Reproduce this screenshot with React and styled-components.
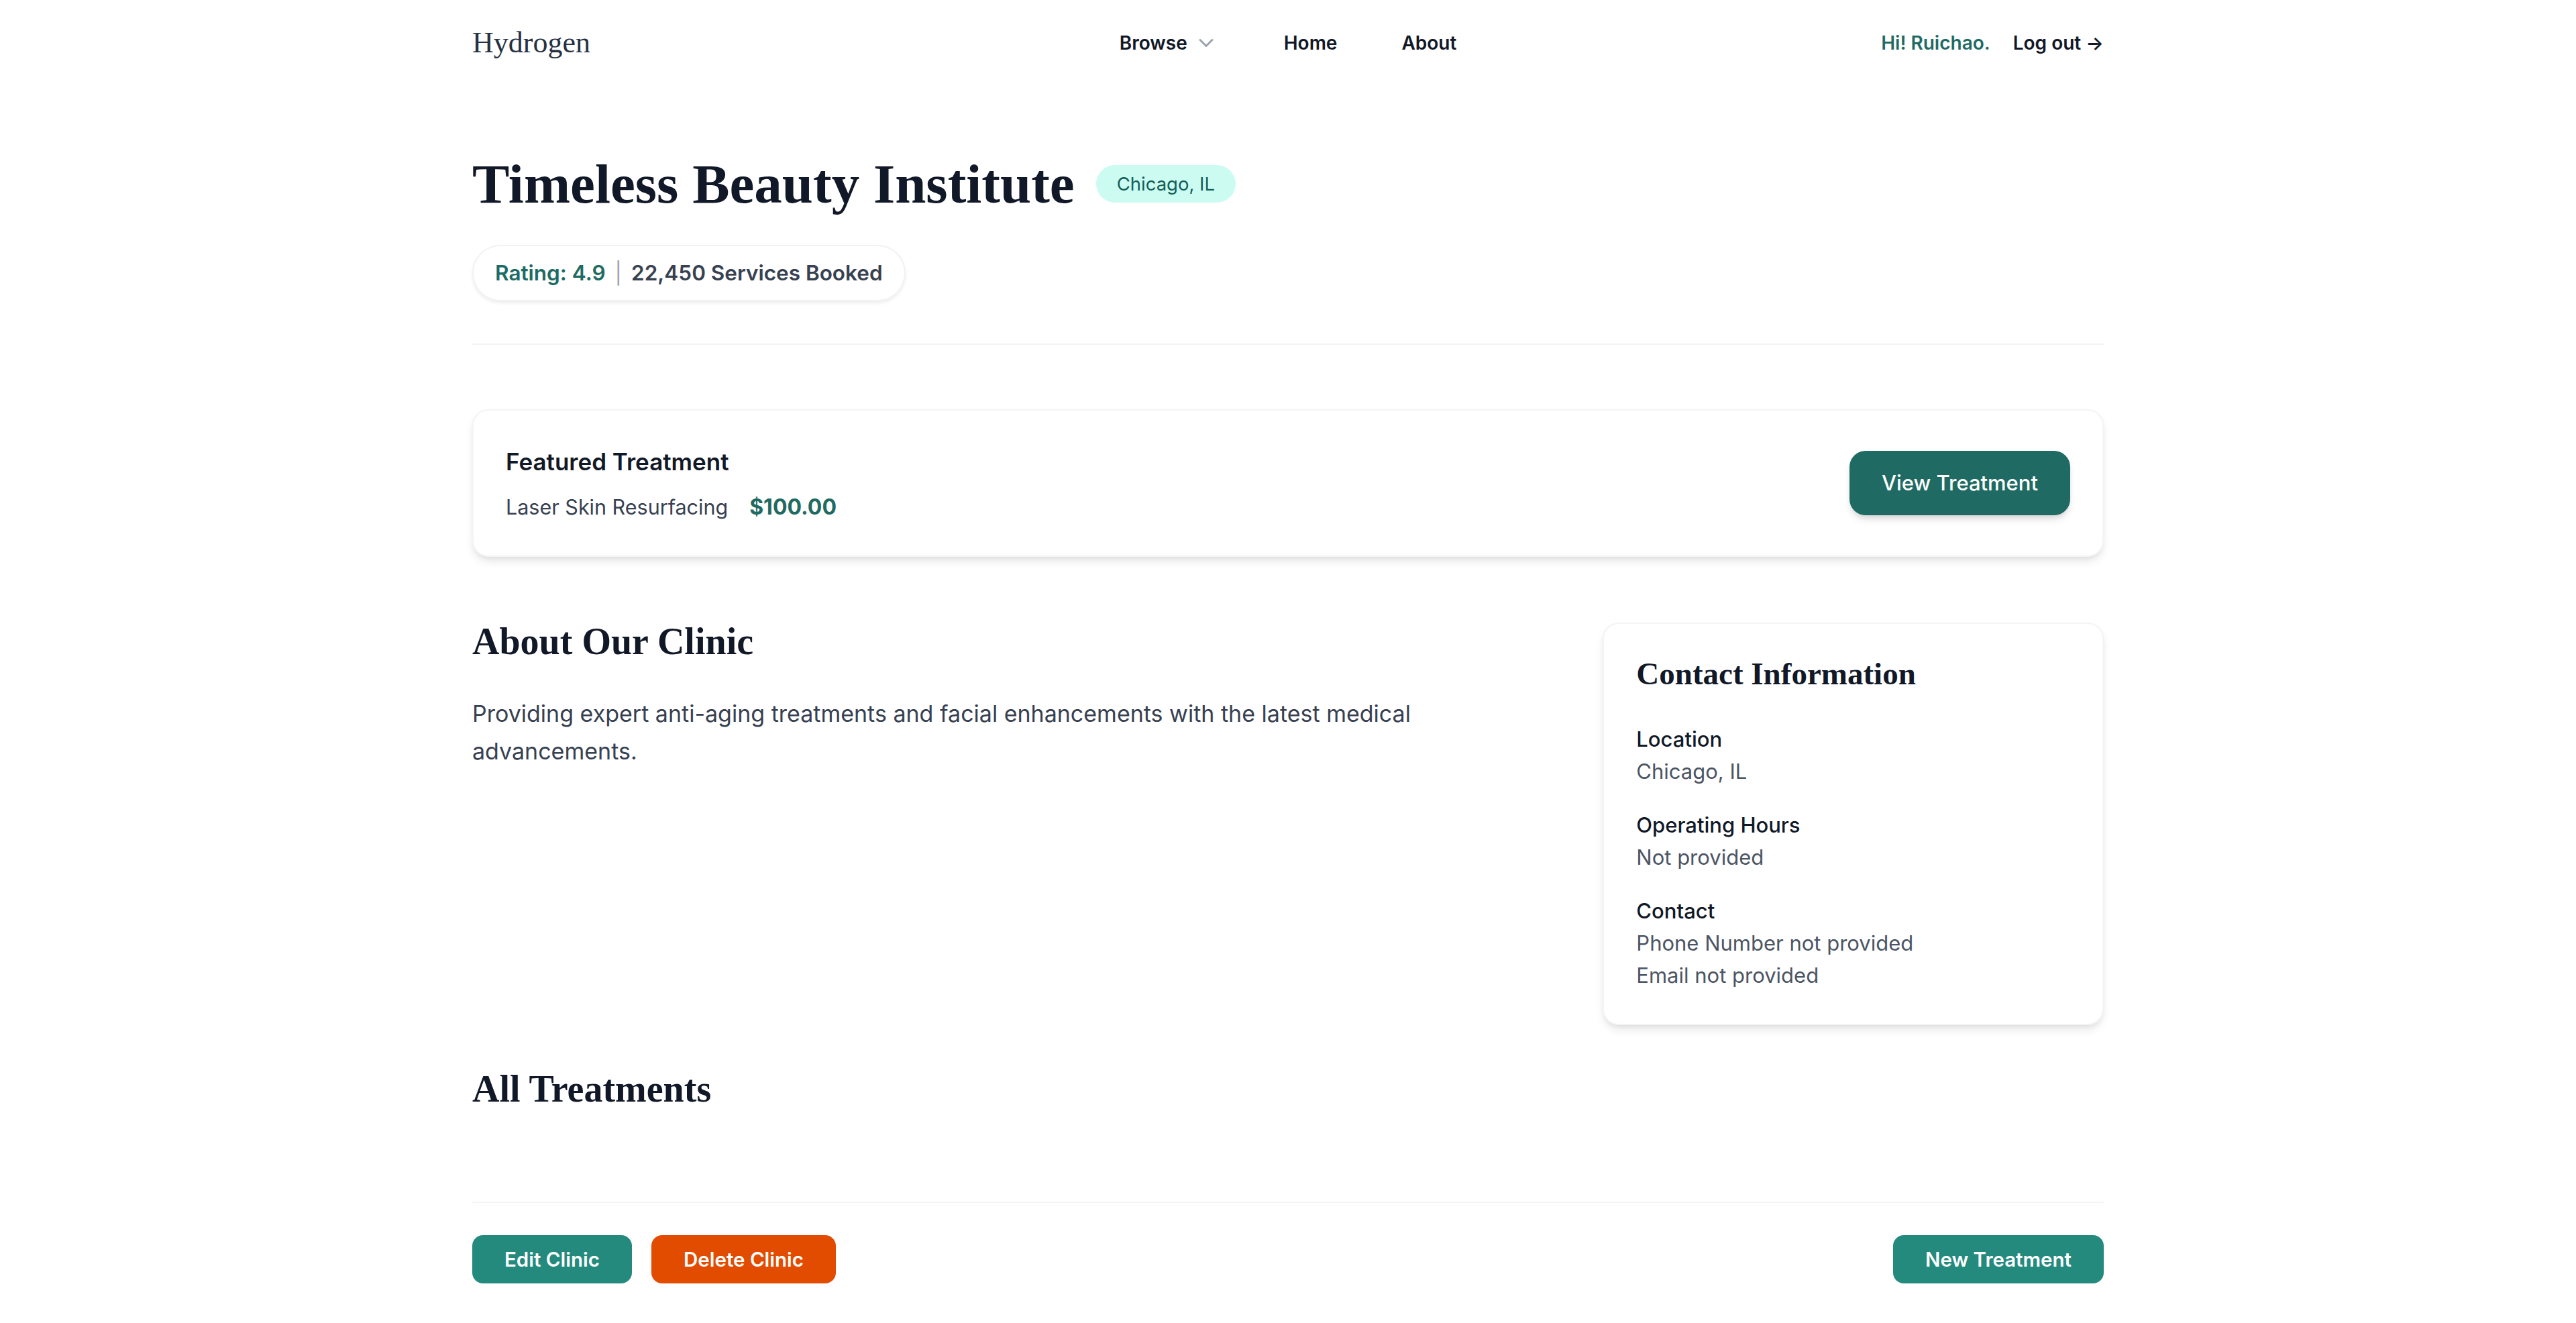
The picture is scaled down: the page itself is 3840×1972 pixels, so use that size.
import React from 'react';
import styled, { createGlobalStyle } from 'styled-components';

const GlobalStyle = createGlobalStyle`
  * {
    box-sizing: border-box;
  }

  body {
    margin: 0;
    background: #ffffff;
    color: #111827;
    font-family: Inter, "Noto Sans", sans-serif;
  }
`;

const serif = `"Liberation Serif", "DejaVu Serif", Georgia, serif`;

const teal = '#1f6b63';

const Container = styled.div`
    max-width: 2432px;
    margin: 0 auto;
`;

const Nav = styled.nav`
    height: 128px;
    display: grid;
    grid-template-columns: 1fr auto 1fr;
    align-items: center;
`;

const Logo = styled.a`
    justify-self: start;
    font-family: ${serif};
    font-size: 44px;
    line-height: 56px;
    color: #273142;
    text-decoration: none;
`;

const NavLinks = styled.div`
    display: flex;
    align-items: center;
    gap: 96px;
`;

const NavLink = styled.a`
    display: flex;
    align-items: center;
    gap: 8px;
    font-size: 28px;
    line-height: 40px;
    font-weight: 600;
    color: #111827;
    text-decoration: none;
`;

const UserArea = styled.div`
    justify-self: end;
    display: flex;
    align-items: center;
    gap: 34px;
    font-size: 28px;
    line-height: 40px;
    font-weight: 600;
`;

const Greeting = styled.span`
    color: ${teal};
`;

const Header = styled.header`
    padding: 106px 0 63px;
    border-bottom: 2px solid #f3f4f6;
`;

const TitleRow = styled.div`
    display: flex;
    align-items: center;
    gap: 32px;
`;

const Title = styled.h1`
    margin: 0;
    font-family: ${serif};
    font-weight: 700;
    font-size: 83px;
    line-height: 80px;
    color: #111827;
`;

const Badge = styled.span`
    padding: 8px 31px;
    border-radius: 9999px;
    background: #ccfbf1;
    color: #115e59;
    font-size: 27.5px;
    line-height: 40px;
`;

const StatsPill = styled.div`
    display: inline-flex;
    align-items: center;
    margin-top: 51px;
    padding: 16px 32px;
    border: 2px solid #f1f2f5;
    border-radius: 9999px;
    box-shadow: 0 3px 5px rgba(0, 0, 0, 0.07);
    font-size: 31.5px;
    line-height: 48px;
    font-weight: 600;
`;

const Stat = styled.span`
    color: ${p => p.$accent ? teal : '#374151'};
`;

const Sep = styled.span`
    margin: 0 14px;
    color: #9ca3af;
    font-weight: 400;
`;

const Card = styled.section`
    border: 2px solid #f3f4f6;
    border-radius: 24px;
    background: #ffffff;
    box-shadow: 0 8px 14px -2px rgba(0, 0, 0, 0.1), 0 4px 8px -4px rgba(0, 0, 0, 0.08);
    padding: 48px;
`;

const FeaturedCard = styled(Card)`
    margin-top: 96px;
    display: flex;
    align-items: center;
    justify-content: space-between;
`;

const FeaturedTitle = styled.h3`
    margin: 0;
    font-size: 35px;
    line-height: 56px;
    font-weight: 600;
    color: #111827;
`;

const FeaturedLine = styled.div`
    display: flex;
    align-items: center;
    gap: 32px;
    margin-top: 16px;
    font-size: 30.5px;
    line-height: 48px;
`;

const TreatmentName = styled.span`
    color: #374151;
`;

const Price = styled.span`
    color: ${teal};
    font-weight: 700;
    font-size: 32px;
`;

const Button = styled.button`
    border: 0;
    cursor: pointer;
    color: #ffffff;
    font-family: Inter, "Noto Sans", sans-serif;
    font-weight: 600;
    font-size: 29.5px;
    line-height: 40px;
    padding: 16px 48px;
    border-radius: 16px;
    background: ${p => p.$danger ? '#e24c00' : '#248a7e'};
`;

const ViewButton = styled(Button)`
    background: ${teal};
    font-weight: 500;
    font-size: 31px;
    line-height: 48px;
    padding: 24px 48px;
    border-radius: 24px;
    box-shadow: 0 8px 12px -2px rgba(0, 0, 0, 0.12), 0 4px 8px -4px rgba(0, 0, 0, 0.1);
`;

const InfoGrid = styled.div`
    margin-top: 98px;
    display: grid;
    grid-template-columns: repeat(3, 1fr);
    gap: 96px;
    align-items: start;
`;

const AboutColumn = styled.div`
    grid-column: span 2;
`;

const SectionTitle = styled.h2`
    margin: 0;
    font-family: ${serif};
    font-weight: 700;
    font-size: 56px;
    line-height: ${p => p.$lh || 56}px;
    color: #111827;
`;

const Paragraph = styled.p`
    max-width: 1500px;
    margin: 52px 0 0;
    font-size: 34px;
    line-height: 56px;
    color: #374151;
`;

const ContactTitle = styled.h3`
    margin: 0 0 48px;
    font-family: ${serif};
    font-weight: 700;
    font-size: 47px;
    line-height: 52px;
    color: #111827;
`;

const ContactList = styled.div`
    display: flex;
    flex-direction: column;
    gap: 32px;
`;

const Field = styled.div`
    font-size: 31px;
    line-height: 48px;
`;

const Label = styled.div`
    font-weight: 500;
    color: #111827;
`;

const Value = styled.div`
    color: #4b5563;
`;

const TreatmentsSection = styled.section`
    margin-top: 63px;
`;

const Footer = styled.footer`
    margin-top: 136px;
    padding-top: 48px;
    border-top: 2px solid #f3f4f6;
    display: flex;
    justify-content: space-between;
    align-items: center;
`;

const ButtonGroup = styled.div`
    display: flex;
    gap: 29px;
`;

const Chevron = () => (
    <svg width="40" height="40" viewBox="0 0 20 20" fill="none">
        <path d="M5.5 7.75 10 12.25l4.5-4.5" stroke="#9ca3af" strokeWidth="1.5" strokeLinecap="round" strokeLinejoin="round" />
    </svg>
);

const contact = [
    { label: 'Location', values: ['Chicago, IL'] },
    { label: 'Operating Hours', values: ['Not provided'] },
    { label: 'Contact', values: ['Phone Number not provided', 'Email not provided'] },
];

export default function App() {
    return (
        <>
            <GlobalStyle />
            <Container>
                <Nav>
                    <Logo href="#">Hydrogen</Logo>
                    <NavLinks>
                        <NavLink href="#">Browse <Chevron /></NavLink>
                        <NavLink href="#">Home</NavLink>
                        <NavLink href="#">About</NavLink>
                    </NavLinks>
                    <UserArea>
                        <Greeting>Hi! Ruichao.</Greeting>
                        <span>Log out →</span>
                    </UserArea>
                </Nav>

                <Header>
                    <TitleRow>
                        <Title>Timeless Beauty Institute</Title>
                        <Badge>Chicago, IL</Badge>
                    </TitleRow>
                    <StatsPill>
                        <Stat $accent>Rating: 4.9</Stat>
                        <Sep>|</Sep>
                        <Stat>22,450 Services Booked</Stat>
                    </StatsPill>
                </Header>

                <FeaturedCard>
                    <div>
                        <FeaturedTitle>Featured Treatment</FeaturedTitle>
                        <FeaturedLine>
                            <TreatmentName>Laser Skin Resurfacing</TreatmentName>
                            <Price>$100.00</Price>
                        </FeaturedLine>
                    </div>
                    <ViewButton>View Treatment</ViewButton>
                </FeaturedCard>

                <InfoGrid>
                    <AboutColumn>
                        <SectionTitle>About Our Clinic</SectionTitle>
                        <Paragraph>
                            Providing expert anti-aging treatments and facial enhancements with the latest medical advancements.
                        </Paragraph>
                    </AboutColumn>
                    <Card>
                        <ContactTitle>Contact Information</ContactTitle>
                        <ContactList>
                            {contact.map(item => (
                                <Field key={item.label}>
                                    <Label>{item.label}</Label>
                                    {item.values.map(v => <Value key={v}>{v}</Value>)}
                                </Field>
                            ))}
                        </ContactList>
                    </Card>
                </InfoGrid>

                <TreatmentsSection>
                    <SectionTitle $lh={64}>All Treatments</SectionTitle>
                </TreatmentsSection>

                <Footer>
                    <ButtonGroup>
                        <Button>Edit Clinic</Button>
                        <Button $danger>Delete Clinic</Button>
                    </ButtonGroup>
                    <Button>New Treatment</Button>
                </Footer>
            </Container>
        </>
    );
}
